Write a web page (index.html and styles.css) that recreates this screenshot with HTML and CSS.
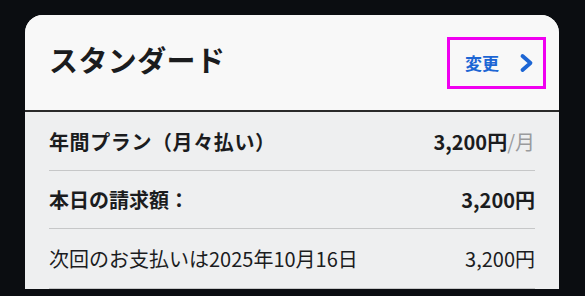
FILE: index.html
```html
<!DOCTYPE html>
<html lang="ja">
<head>
<meta charset="utf-8">
<link rel="stylesheet" href="styles.css">
</head>
<body>
<div class="card">
  <div class="card-header">
    <h1 class="title">スタンダード</h1>
    <a class="change" href="#">
      <span class="change-label">変更</span>
      <svg class="chevron" width="16" height="20" viewBox="0 0 16 20"><path d="M3.5 3 L11.5 10 L3.5 17" fill="none" stroke="#1d66d4" stroke-width="3.8" stroke-linecap="round" stroke-linejoin="round"/></svg>
    </a>
  </div>
  <div class="card-body">
    <div class="row">
      <span class="label bold wide">年間プラン（月々払い）</span>
      <span class="value bold">3,200円<span class="unit">/月</span></span>
    </div>
    <div class="row">
      <span class="label bold">本日の請求額：</span>
      <span class="value bold">3,200円</span>
    </div>
    <div class="row">
      <span class="label">次回のお支払いは2025年10月16日</span>
      <span class="value">3,200円</span>
    </div>
  </div>
</div>
</body>
</html>
```
FILE: styles.css
```css
html, body {
  margin: 0;
  padding: 0;
  background: #0b0d11;
  width: 585px;
  height: 296px;
  overflow: hidden;
  font-family: "Noto Sans CJK JP", "Noto Sans", sans-serif;
  color: #1b1c1e;
}
.card {
  margin: 15px 0 0 25px;
  width: 534px;
  border-radius: 18px 18px 0 0;
  overflow: hidden;
  background: #eeeff0;
}
.card-header {
  height: 95px;
  background: #f8f8f8;
  border-bottom: 2px solid #2a2a2a;
  display: flex;
  align-items: center;
  justify-content: space-between;
  padding: 0 13px 0 24px;
}
.title {
  margin: 0;
  font-size: 29px;
  font-weight: 700;
  letter-spacing: 0.4px;
  line-height: 1;
  margin-top: -6px;
}
.change {
  box-sizing: border-box;
  width: 99px;
  height: 52px;
  border: 3px solid #f000f0;
  display: flex;
  align-items: center;
  padding: 0 8px 0 15px;
  justify-content: space-between;
  text-decoration: none;
}
.change-label {
  color: #1d66d4;
  font-size: 17px;
  font-weight: 700;
}
.chevron { display: block; }
.card-body {
  padding: 0 24px;
}
.row {
  height: 57px;
  border-bottom: 1px solid #c6c7c8;
  display: flex;
  align-items: center;
  justify-content: space-between;
}
.row:first-child { height: 58px; }
.row:last-child { height: 59px; }
.label {
  font-size: 20px;
}
.wide { letter-spacing: 0.6px; }
.value {
  font-size: 20px;
}
.bold { font-weight: 700; }
.unit {
  color: #9a9b9d;
  font-weight: 400;
}
```
